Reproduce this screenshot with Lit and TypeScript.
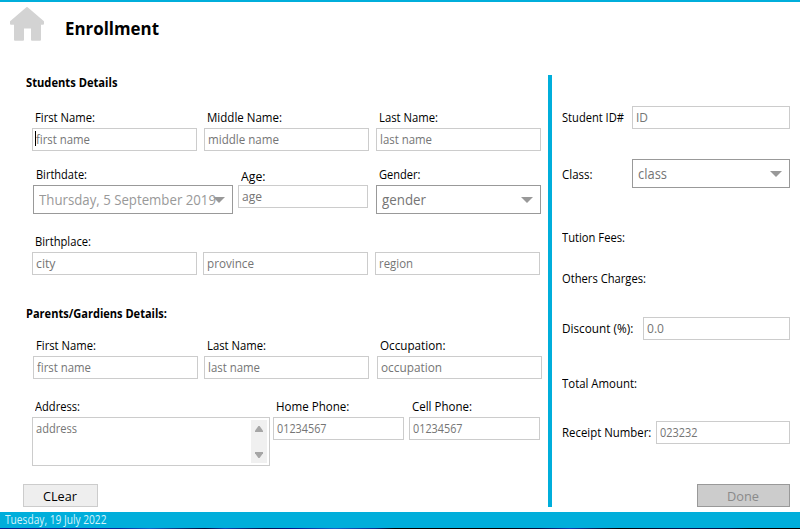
import { LitElement, html, css, svg } from "lit";
import { customElement, property } from "lit/decorators.js";

/** A run of text condensed horizontally so that it spans `width` pixels. */
@customElement("fitted-text")
class FittedText extends LitElement {
  @property() text = "";
  @property({ type: Number }) width = 0;

  static styles = css`
    :host { display: inline-block; white-space: pre; vertical-align: top; }
    .run { display: inline-block; transform-origin: 0 0; }
  `;

  firstUpdated() {
    const run = this.renderRoot.querySelector(".run") as HTMLElement;
    const natural = run.getBoundingClientRect().width;
    this.style.width = `${this.width}px`;
    run.style.transform = `scaleX(${this.width / natural})`;
  }

  render() {
    return html`<span class="run">${this.text}</span>`;
  }
}

const fit = (text: string, width: number) =>
  html`<fitted-text .text=${text} .width=${width}></fitted-text>`;

const arrow = html`<svg class="arrow" width="12" height="6" viewBox="0 0 12 6">
  <path d="M0 0H12L6 6Z" fill="#999" />
</svg>`;

const box = (text: string, width: number, extra: unknown = "") =>
  html`<div class="box">${extra}${fit(text, width)}</div>`;

const combo = (text: string, width: number, cls = "") =>
  html`<div class="combo ${cls}">${fit(text, width)}${arrow}</div>`;

const field = (label: string, width: number, control: unknown, cls = "") =>
  html`<div class="field ${cls}"><label>${label ? fit(label, width) : ""}</label>${control}</div>`;

@customElement("app-root")
class AppRoot extends LitElement {
  static styles = css`
    :host {
      display: flex; flex-direction: column; width: 800px; height: 529px;
      box-sizing: border-box; overflow: hidden; background: #fff; color: #000;
      border-top: 2px solid #00aedb;
      font: 12px/20px "Open Sans", "Noto Sans", sans-serif;
    }
    * { box-sizing: border-box; }
    svg { display: block; flex: none; }
    header { display: flex; height: 73px; padding: 5px 0 0 9px; gap: 19.5px; }
    h1 { margin: 6px 0 0; font-size: 18px; line-height: 30px; height: 30px; font-weight: 700; }
    main { display: flex; height: 437px; }
    .form { width: 548px; display: flex; flex-direction: column; align-items: flex-start; }
    .rule { width: 4px; height: 432px; background: #00aedb; }
    .side { width: 248px; padding: 0 10px; display: flex; flex-direction: column; }
    h2 { margin: 0 0 0 25.5px; font-size: 12px; line-height: 16px; height: 16px; font-weight: 700; }
    .row { display: grid; align-items: start; padding-left: 32px; }
    .names { grid-template-columns: 165px 165px 165px; column-gap: 7px; margin-top: 17px; }
    .birth { grid-template-columns: 200px 130px 165px; column-gap: 5px; padding-left: 33px; margin-top: 14px; }
    .birth .field:last-child { margin-left: 3px; }
    .place { grid-template-columns: 165px 165px 165px; column-gap: 6px; margin-top: 18px; }
    .place .field:last-child { margin-left: 1px; }
    .parents { grid-template-columns: 165px 165px 165px; column-gap: 6px; padding-left: 33px; margin-top: 14px; }
    .parents .field:last-child { margin-left: 2px; }
    .contact { grid-template-columns: 238px 131px 131px; column-gap: 3px; margin-top: 18px; }
    .contact .field:last-child { margin-left: 2px; }
    .second { margin-top: 31px; }
    .field { display: flex; flex-direction: column; width: 100%; }
    label { display: block; height: 20px; line-height: 20px; padding-left: 2.6px; white-space: nowrap; }
    .low label { line-height: 24px; }
    .box { position: relative; height: 23px; border: 1px solid #ccc; padding-left: 3px; line-height: 22px; color: #757575; background: #fff; white-space: nowrap; }
    .caret { position: absolute; left: 2px; top: 2px; width: 1px; height: 15px; background: #000; }
    .combo { display: flex; align-items: center; justify-content: space-between; height: 29px; border: 1px solid #999; padding: 0 7.5px 0 5px; font-size: 14px; line-height: 29px; color: #757575; white-space: nowrap; }
    .date { color: #999; }
    .date .arrow { margin-left: -6px; }
    .area { display: flex; justify-content: space-between; height: 49px; border: 1px solid #ccc; padding: 2px 2px 2px 3px; line-height: 18px; color: #757575; }
    .scroll { display: flex; flex-direction: column; justify-content: space-between; align-items: center; width: 16px; height: 43px; padding: 6px 0 5px; background: #f0f0f0; }
    .btn { display: flex; align-items: center; justify-content: center; height: 23px; border: 1px solid #ccc; padding-top: 2px; background: #eee; line-height: 23px; }
    .clear { width: 75px; margin: 18px 0 0 23px; padding-right: 2px; }
    .done { width: 93px; margin: 40px 0 0 auto; padding-right: 2px; background: #ccc; border-color: #999; color: #8a8a8a; }
    .line { display: grid; align-items: center; height: 23px; flex: none; }
    .line label { padding-left: 0; height: 21px; line-height: 21px; }
    .id { grid-template-columns: 70px 158px; margin-top: 31px; }
    .class { grid-template-columns: 70px 158px; height: 29px; margin-top: 30px; }
    .class label { line-height: 23px; }
    .tuition { margin-top: 38px; }
    .others { margin-top: 18px; }
    .discount { grid-template-columns: 81px 147px; margin-top: 27px; }
    .total { margin-top: 32px; }
    .receipt { grid-template-columns: 94px 134px; margin-top: 26px; }
    footer { height: 16px; flex: none; background: #00aedb; color: #d5f3fb; padding-left: 5px; line-height: 16px; }
    .desk { height: 1px; flex: none; background: linear-gradient(90deg, #0a1c8c 0, #0a2a9c 120px, #1660c8 150px, #02083a 205px, #1040b0 225px, #02104a 265px, #06128c 290px, #1560c8 335px, #0a2c90 375px, #000 395px, #000 500px, #02104a 540px, #1238b0 570px, #000 620px, #02145a 680px, #02104a 730px, #000 750px); }
  `;

  render() {
    return html`
      <header>
        <svg width="36" height="36" viewBox="0 0 36 36">
          <path d="M18 1.5 34 15.2V17.2H31V33.2H23V20.8H14V33.2H6V17.2H2V15.2Z"
            transform="translate(0 -.4)"
            fill="#d3d3d3" stroke="#d3d3d3" stroke-width="2" stroke-linejoin="round" />
        </svg>
        <h1>${fit("Enrollment", 94)}</h1>
      </header>
      <main>
        <div class="form">
          <h2>${fit("Students Details", 91.5)}</h2>
          <div class="row names">
            ${field("First Name:", 60, box("first name", 54, html`<i class="caret"></i>`))}
            ${field("Middle Name:", 75, box("middle name", 71))}
            ${field("Last Name:", 59, box("last name", 52))}
          </div>
          <div class="row birth">
            ${field("Birthdate:", 51, combo("Thursday, 5 September 2019", 177, "date"))}
            ${field("Age:", 24.5, box("age", 20), "low")}
            ${field("Gender:", 41.5, combo("gender", 44))}
          </div>
          <div class="row place">
            ${field("Birthplace:", 56, box("city", 19.5))}
            ${field("", 0, box("province", 47))}
            ${field("", 0, box("region", 34))}
          </div>
          <h2 class="second">${fit("Parents/Gardiens Details:", 141)}</h2>
          <div class="row parents">
            ${field("First Name:", 60, box("first name", 54))}
            ${field("Last Name:", 59, box("last name", 52))}
            ${field("Occupation:", 65.5, box("occupation", 61))}
          </div>
          <div class="row contact">
            ${field("Address:", 45, html`<div class="area">
              ${fit("address", 41)}
              <div class="scroll">
                <svg width="8" height="6" viewBox="0 0 8 6">${svg`<path d="M3.4 0h1.2L8 4.8V6H0V4.8Z" fill="#a6a6a6" />`}</svg>
                <svg width="8" height="6" viewBox="0 0 8 6">${svg`<path d="M3.4 6h1.2L8 1.2V0H0V1.2Z" fill="#a6a6a6" />`}</svg>
              </div>
            </div>`)}
            ${field("Home Phone:", 73.3, box("01234567", 49.5))}
            ${field("Cell Phone:", 60, box("01234567", 49.5))}
          </div>
          <div class="btn clear">${fit("CLear", 34)}</div>
        </div>
        <div class="rule"></div>
        <div class="side">
          <div class="line id"><label>${fit("Student ID#", 62)}</label>${box("ID", 12)}</div>
          <div class="line class"><label>${fit("Class:", 30.5)}</label>${combo("class", 29)}</div>
          <div class="line tuition"><label>${fit("Tution Fees:", 63)}</label></div>
          <div class="line others"><label>${fit("Others Charges:", 84)}</label></div>
          <div class="line discount"><label>${fit("Discount (%):", 71.3)}</label>${box("0.0", 17)}</div>
          <div class="line total"><label>${fit("Total Amount:", 75)}</label></div>
          <div class="line receipt"><label>${fit("Receipt Number:", 89.3)}</label>${box("023232", 37.5)}</div>
          <div class="btn done">${fit("Done", 32)}</div>
        </div>
      </main>
      <footer>${fit("Tuesday, 19 July 2022", 101.5)}</footer>
      <div class="desk"></div>
    `;
  }
}
